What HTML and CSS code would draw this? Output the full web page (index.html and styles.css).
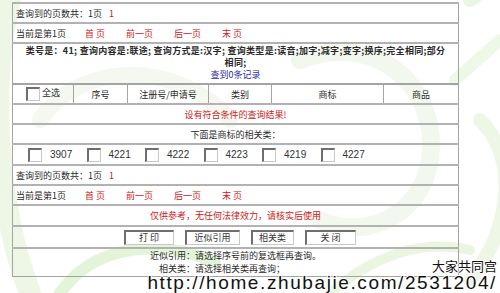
FILE: index.html
```html
<!DOCTYPE html>
<html lang="zh-CN">
<head>
    <meta charset="UTF-8">
    <title>商标查询结果</title>
    <link rel="stylesheet" href="styles.css">
</head>
<body>
    <svg class="bg" width="500" height="293" viewBox="0 0 500 293">
        <g fill="none" stroke-linecap="round">
            <path d="M10 0 C -10 80, -5 200, 30 293" stroke="#eef7e6" stroke-width="22"/>
            <path d="M60 293 C 90 250, 150 235, 215 262" stroke="#e4f4d8" stroke-width="12"/>
            <path d="M470 0 L 500 -20" stroke="#eaf6e0" stroke-width="14"/>
            <path d="M455 80 L 500 40" stroke="#eef8e6" stroke-width="12"/>
            <path d="M480 120 C 520 160, 510 230, 470 280" stroke="#eef7e6" stroke-width="14"/>
            <path d="M300 60 C 380 30, 440 90, 430 160 C 420 220, 360 240, 320 220" stroke="#f3f8ef" stroke-width="18"/>
            <path d="M40 120 C 80 60, 180 60, 230 120" stroke="#f4f8f0" stroke-width="16"/>
            <path d="M330 293 C 380 250, 430 240, 470 250" stroke="#eaf6e0" stroke-width="10"/>
        </g>
    </svg>

    <table class="result">
        <colgroup>
            <col class="c1"><col class="c2"><col class="c3"><col class="c4"><col class="c5"><col class="c6">
        </colgroup>
        <tr class="row-page">
            <td colspan="6">查询到的页数共：1页<span class="red num">1</span></td>
        </tr>
        <tr class="row-nav">
            <td colspan="6">
                <div class="nav">
                    <span>当前是第1页</span>
                    <a href="#">首 页</a>
                    <a href="#">前一页</a>
                    <a href="#">后一页</a>
                    <a href="#">末 页</a>
                </div>
            </td>
        </tr>
        <tr class="row-info">
            <td colspan="6">
                <b>类号是：41; 查询内容是:联途; 查询方式是:汉字; 查询类型是:读音;加字;减字;变字;换序;完全相同;部分<br>相同;</b><br>
                <span class="blue">查到0条记录</span>
            </td>
        </tr>
        <tr class="row-head">
            <td><span class="chk"></span>全选</td>
            <td>序号</td>
            <td>注册号/申请号</td>
            <td>类别</td>
            <td>商标</td>
            <td>商品</td>
        </tr>
        <tr class="row-center">
            <td colspan="6" class="red">设有符合条件的查询结果!</td>
        </tr>
        <tr class="row-center">
            <td colspan="6">下面是商标的相关类：</td>
        </tr>
        <tr class="row-classes">
            <td colspan="6">
                <div class="classes">
                    <label><span class="chk"></span>3907</label>
                    <label><span class="chk"></span>4221</label>
                    <label><span class="chk"></span>4222</label>
                    <label><span class="chk"></span>4223</label>
                    <label><span class="chk"></span>4219</label>
                    <label><span class="chk"></span>4227</label>
                </div>
            </td>
        </tr>
        <tr class="row-page">
            <td colspan="6">查询到的页数共：1页<span class="red num">1</span></td>
        </tr>
        <tr class="row-nav">
            <td colspan="6">
                <div class="nav">
                    <span>当前是第1页</span>
                    <a href="#">首 页</a>
                    <a href="#">前一页</a>
                    <a href="#">后一页</a>
                    <a href="#">末 页</a>
                </div>
            </td>
        </tr>
        <tr class="row-center row-tall">
            <td colspan="6" class="red">仅供参考，无任何法律效力，请核实后使用</td>
        </tr>
        <tr class="row-buttons">
            <td colspan="6">
                <div class="buttons">
                    <button class="b-print">打 印</button>
                    <button class="b-similar">近似引用</button>
                    <button class="b-related">相关类</button>
                    <button class="b-close">关 闭</button>
                </div>
            </td>
        </tr>
        <tr class="row-notes">
            <td colspan="6">
                <div class="notes">
                    <span class="lbl">近似引用：</span><span>请选择序号前的复选框再查询。</span>
                    <span class="lbl">相关类：</span><span>请选择相关类再查询；</span>
                </div>
            </td>
        </tr>
    </table>

    <div class="mark">
        <div class="mark-name">大家共同宫</div>
        <div class="mark-url">http://home.zhubajie.com/2531204/</div>
    </div>
</body>
</html>
```

FILE: styles.css
```css
body {
    margin: 0;
    padding: 2px 0 0 12px;
    font-family: "Noto Sans CJK SC", "DejaVu Sans", sans-serif;
    font-size: 9px;
    color: #2a2a2a;
    background: #fff;
    position: relative;
    width: 488px;
    height: 291px;
    overflow: hidden;
}
.bg {
    position: absolute;
    top: 0;
    left: 0;
    z-index: -1;
}
.result {
    width: 446px;
    border-collapse: collapse;
    border: 1px solid #a4a4a4;
    table-layout: fixed;
}
.c1 { width: 61px; }
.c2 { width: 54px; }
.c3 { width: 81px; }
.c4 { width: 63px; }
.c5 { width: 112px; }
.c6 { width: 75px; }
.result td {
    border-top: 2px solid #b2b2b2;
    padding: 0 3px;
    height: 18px;
    line-height: 11px;
    white-space: nowrap;
}
.red {
    color: #cc2020;
}
.blue {
    color: #2c2ca8;
}
.num {
    margin-left: 7px;
}
a {
    color: #cc2020;
    text-decoration: none;
}
.nav {
    display: flex;
    gap: 21px;
}
.nav span {
    margin-right: -2px;
}
.row-info td {
    height: 35px;
    text-align: center;
    white-space: normal;
    line-height: 12px;
    padding: 1px 2px 2px;
}
.row-info b {
    font-weight: bold;
    letter-spacing: 0.3px;
}
.row-head td {
    border: 1px solid #a4a4a4;
    border-top-width: 2px;
    text-align: center;
    padding: 0;
}
.row-head .chk {
    margin-right: 2px;
}
.chk {
    display: inline-block;
    vertical-align: middle;
    width: 11px;
    height: 11px;
    background: #fff;
    border-top: 2px solid #6e6e6e;
    border-left: 2px solid #6e6e6e;
    border-right: 1px solid #c8c8c8;
    border-bottom: 1px solid #c8c8c8;
}
.row-center td {
    text-align: center;
}
.row-tall td {
    height: 19px;
}
.row-classes td {
    height: 19px;
    padding: 0 0 0 15px;
}
.classes {
    display: flex;
}
.classes label {
    width: 58.5px;
    font-family: "Liberation Sans", Arial, sans-serif;
    font-size: 10px;
    color: #333;
}
.classes .chk {
    margin-right: 8px;
}
.row-buttons td {
    height: 20px;
}
.buttons {
    display: flex;
    justify-content: center;
    gap: 11px;
    padding-left: 8px;
}
.buttons button {
    font-family: inherit;
    font-size: 9px;
    color: #333;
    background: #fff;
    height: 15px;
    padding: 0;
    line-height: 11px;
    border-top: 2px solid #6e6e6e;
    border-left: 2px solid #6e6e6e;
    border-right: 1px solid #c8c8c8;
    border-bottom: 1px solid #c8c8c8;
}
.b-print { width: 50px; }
.b-similar { width: 55px; }
.b-related { width: 43px; }
.b-close { width: 51px; }
.row-notes td {
    height: 25px;
    padding-bottom: 2px;
}
.notes {
    display: grid;
    grid-template-columns: auto auto;
    justify-content: center;
    row-gap: 2px;
}
.notes .lbl {
    text-align: right;
}
.mark {
    position: absolute;
    right: 3px;
    bottom: 0;
    text-align: right;
    color: #111;
    text-shadow: 1px 0 #fff, -1px 0 #fff, 0 1px #fff, 0 -1px #fff;
}
.mark-name {
    font-size: 13px;
    line-height: 15px;
}
.mark-url {
    font-family: "Liberation Sans", Arial, sans-serif;
    font-size: 19px;
    letter-spacing: 1.6px;
    line-height: 20px;
}
```
